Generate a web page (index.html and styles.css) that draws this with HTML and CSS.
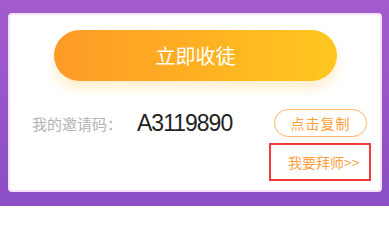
FILE: index.html
```html
<!DOCTYPE html>
<html lang="zh-CN">
<head>
<meta charset="utf-8">
<link rel="stylesheet" href="styles.css">
</head>
<body>
<div class="page">
  <div class="card">
    <div class="cta">立即收徒</div>
    <div class="code-row">
      <span class="code-label">我的邀请码：</span>
      <span class="code-value">A3119890</span>
      <span class="copy-btn">点击复制</span>
    </div>
    <div class="master-link">我要拜师&gt;&gt;</div>
  </div>
</div>
</body>
</html>
```
FILE: styles.css
```css
html, body {
  margin: 0;
  padding: 0;
}
body {
  width: 389px;
  height: 206px;
  overflow: hidden;
  font-family: "Noto Sans CJK SC", "Noto Sans", sans-serif;
}
.page {
  box-sizing: border-box;
  width: 389px;
  height: 206px;
  padding: 13px 7px 14px 8px;
  background: linear-gradient(180deg, #a25ccc 0%, #8b4ec4 100%);
}
.card {
  box-sizing: border-box;
  height: 179px;
  background: #fff;
  border-radius: 4px;
  border: 2px solid #f3e2fa;
  display: flex;
  flex-direction: column;
  padding-top: 15px;
}
.cta {
  align-self: center;
  width: 283px;
  height: 51px;
  border-radius: 26px;
  background: linear-gradient(90deg, #fe9a27 0%, #ffb022 50%, #ffc71f 100%);
  box-shadow: 0 8px 12px rgba(255, 196, 80, 0.28);
  color: #fff;
  font-size: 20px;
  display: flex;
  align-items: center;
  justify-content: center;
  margin-left: 1px;
}
.code-row {
  display: flex;
  align-items: center;
  margin-top: 28px;
  height: 28px;
  padding-left: 22px;
  padding-right: 13px;
}
.code-label {
  color: #b3b3b3;
  font-size: 15px;
  width: 105px;
}
.code-value {
  color: #222;
  font-family: "Liberation Sans", Arial, sans-serif;
  font-size: 23px;
  letter-spacing: -1px;
  flex: 1;
}
.copy-btn {
  box-sizing: border-box;
  width: 93px;
  height: 28px;
  border: 1px solid #ffb466;
  border-radius: 14px;
  color: #ff9f3c;
  font-size: 14px;
  display: flex;
  align-items: center;
  justify-content: center;
  letter-spacing: 1px;
}
.master-link {
  box-sizing: border-box;
  align-self: flex-end;
  margin-top: 6px;
  margin-right: 9px;
  width: 102px;
  height: 38px;
  border: 2px solid #f23838;
  color: #ffa043;
  font-size: 14px;
  display: flex;
  align-items: center;
  padding-left: 17px;
}
```
